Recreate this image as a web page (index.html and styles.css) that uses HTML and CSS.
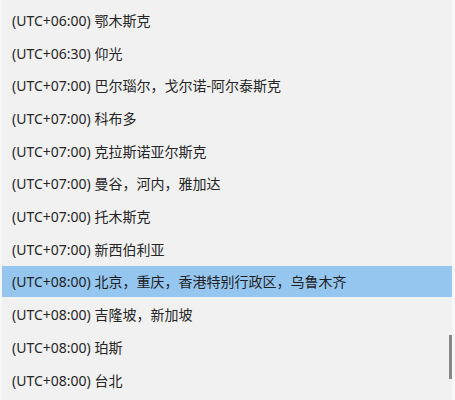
FILE: index.html
```html
<!DOCTYPE html>
<html lang="zh-CN">
<head>
<meta charset="utf-8">
<title>时区</title>
<link rel="stylesheet" href="styles.css">
</head>
<body>
<div class="dropdown">
  <ul class="list">
    <li class="item">(UTC+06:00) 鄂木斯克</li>
    <li class="item">(UTC+06:30) 仰光</li>
    <li class="item">(UTC+07:00) 巴尔瑙尔，戈尔诺-阿尔泰斯克</li>
    <li class="item">(UTC+07:00) 科布多</li>
    <li class="item">(UTC+07:00) 克拉斯诺亚尔斯克</li>
    <li class="item">(UTC+07:00) 曼谷，河内，雅加达</li>
    <li class="item">(UTC+07:00) 托木斯克</li>
    <li class="item">(UTC+07:00) 新西伯利亚</li>
    <li class="item selected">(UTC+08:00) 北京，重庆，香港特别行政区，乌鲁木齐</li>
    <li class="item">(UTC+08:00) 吉隆坡，新加坡</li>
    <li class="item">(UTC+08:00) 珀斯</li>
    <li class="item">(UTC+08:00) 台北</li>
  </ul>
  <div class="scroll-thumb"></div>
</div>
</body>
</html>
```

FILE: styles.css
```css
html, body {
  margin: 0;
  padding: 0;
  width: 455px;
  height: 400px;
  overflow: hidden;
  background: #f2f2f2;
}

.dropdown {
  position: relative;
  width: 455px;
  height: 400px;
  box-sizing: border-box;
  border-left: 2px solid #f7f7f7;
  border-right: 3px solid #f7f7f7;
  background: #f1f1f1;
  font-family: "Noto Sans", "Noto Sans CJK SC", sans-serif;
  font-size: 14px;
  color: #262626;
}

.list {
  list-style: none;
  margin: 0;
  padding: 3.6px 0 0 0;
}

.item {
  height: 32.7px;
  box-sizing: border-box;
  border-top: 1px solid transparent;
  border-bottom: 1px solid transparent;
  padding-left: 10px;
  display: flex;
  align-items: center;
  white-space: nowrap;
  background-clip: padding-box;
}

.item.selected {
  background-color: #95c6f0;
  color: #1f1f1f;
}

.scroll-thumb {
  position: absolute;
  left: 447px;
  top: 335px;
  width: 3px;
  height: 44px;
  background: #888;
}
```
